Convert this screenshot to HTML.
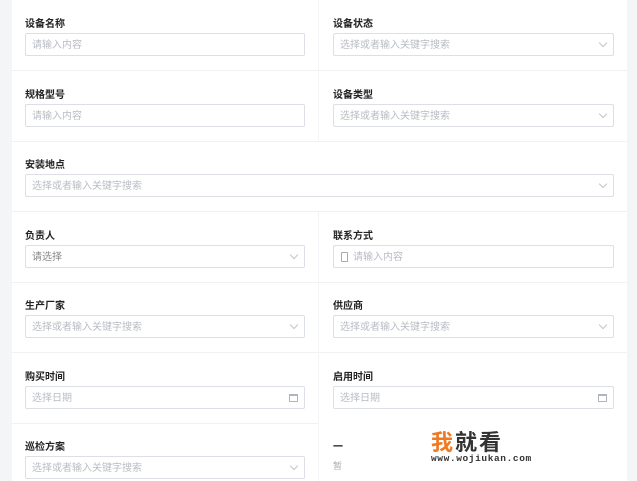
<!DOCTYPE html><html><head><meta charset="utf-8"><style>
*{margin:0;padding:0;box-sizing:border-box}
body{width:637px;height:481px;overflow:hidden;background:#f4f5f7;font-family:"Liberation Sans","Noto Sans CJK SC",sans-serif;position:relative}
.card{position:absolute;background:#fff}
.l{position:absolute;font-size:10px;color:#222;font-weight:bold;line-height:12px;margin-top:3px}
.i{position:absolute;height:23px;border:1px solid #dcdfe6;border-radius:2px;background:#fff;font-size:10px;color:#b8bcc4;line-height:23px;padding-left:6px}
.a{position:absolute;right:7px;top:6px;width:6px;height:6px;border-right:1px solid #c0c4cc;border-bottom:1px solid #c0c4cc;transform:rotate(45deg)}
.c{position:absolute;right:6px;top:7px;width:9px;height:8px;border:1px solid #b0b4bc;border-top-width:2px}
</style></head><body>
<div class="card" style="left:12px;top:0;width:615px;height:481px"></div>
<div style="position:absolute;left:12px;top:70px;width:615px;height:1px;background:#f0f1f3"></div>
<div style="position:absolute;left:12px;top:141px;width:615px;height:1px;background:#f0f1f3"></div>
<div style="position:absolute;left:12px;top:211px;width:615px;height:1px;background:#f0f1f3"></div>
<div style="position:absolute;left:12px;top:282px;width:615px;height:1px;background:#f0f1f3"></div>
<div style="position:absolute;left:12px;top:352px;width:615px;height:1px;background:#f0f1f3"></div>
<div style="position:absolute;left:12px;top:423px;width:615px;height:1px;background:#f0f1f3"></div>
<div style="position:absolute;left:318px;top:0;width:1px;height:141px;background:#f3f4f6"></div>
<div style="position:absolute;left:318px;top:211px;width:1px;height:270px;background:#f3f4f6"></div>

<div class="l" style="left:25px;top:16px">设备名称</div>
<div class="i" style="left:25px;top:33px;width:280px">请输入内容</div>
<div class="l" style="left:333px;top:16px">设备状态</div>
<div class="i" style="left:333px;top:33px;width:281px">选择或者输入关键字搜索<span class="a"></span></div>

<div class="l" style="left:25px;top:87px">规格型号</div>
<div class="i" style="left:25px;top:104px;width:280px">请输入内容</div>
<div class="l" style="left:333px;top:87px">设备类型</div>
<div class="i" style="left:333px;top:104px;width:281px">选择或者输入关键字搜索<span class="a"></span></div>

<div class="l" style="left:25px;top:157px">安装地点</div>
<div class="i" style="left:25px;top:174px;width:589px">选择或者输入关键字搜索<span class="a"></span></div>

<div class="l" style="left:25px;top:228px">负责人</div>
<div class="i" style="left:25px;top:245px;width:280px;color:#888">请选择<span class="a"></span></div>
<div class="l" style="left:333px;top:228px">联系方式</div>
<div class="i" style="left:333px;top:245px;width:281px;padding-left:19px"><span style="position:absolute;left:7px;top:6px;width:7px;height:10px;border:1.5px solid #aaa;border-radius:1px"></span>请输入内容</div>

<div class="l" style="left:25px;top:298px">生产厂家</div>
<div class="i" style="left:25px;top:315px;width:280px">选择或者输入关键字搜索<span class="a"></span></div>
<div class="l" style="left:333px;top:298px">供应商</div>
<div class="i" style="left:333px;top:315px;width:281px">选择或者输入关键字搜索<span class="a"></span></div>

<div class="l" style="left:25px;top:369px">购买时间</div>
<div class="i" style="left:25px;top:386px;width:280px">选择日期<span class="c"></span></div>
<div class="l" style="left:333px;top:369px">启用时间</div>
<div class="i" style="left:333px;top:386px;width:281px">选择日期<span class="c"></span></div>

<div class="l" style="left:25px;top:439px">巡检方案</div>
<div class="i" style="left:25px;top:456px;width:280px">选择或者输入关键字搜索<span class="a"></span></div>
<div style="position:absolute;left:319px;top:410px;width:308px;height:71px;background:#fff"></div>
<div class="l" style="left:333px;top:439px">一</div>
<div style="position:absolute;left:333px;top:459px;font-size:9px;color:#aaa">暂</div>
<div style="position:absolute;left:431px;top:428px;font-size:22px;font-weight:bold;line-height:26px;letter-spacing:2px;font-family:'Noto Sans CJK SC',sans-serif"><span style="color:#f07a22">我</span><span style="color:#333">就看</span></div>
<div style="position:absolute;left:431px;top:453px;font-size:9.5px;color:#333;font-family:'Liberation Mono',monospace;font-weight:bold;letter-spacing:0.6px">www.wojiukan.com</div>
</body></html>
